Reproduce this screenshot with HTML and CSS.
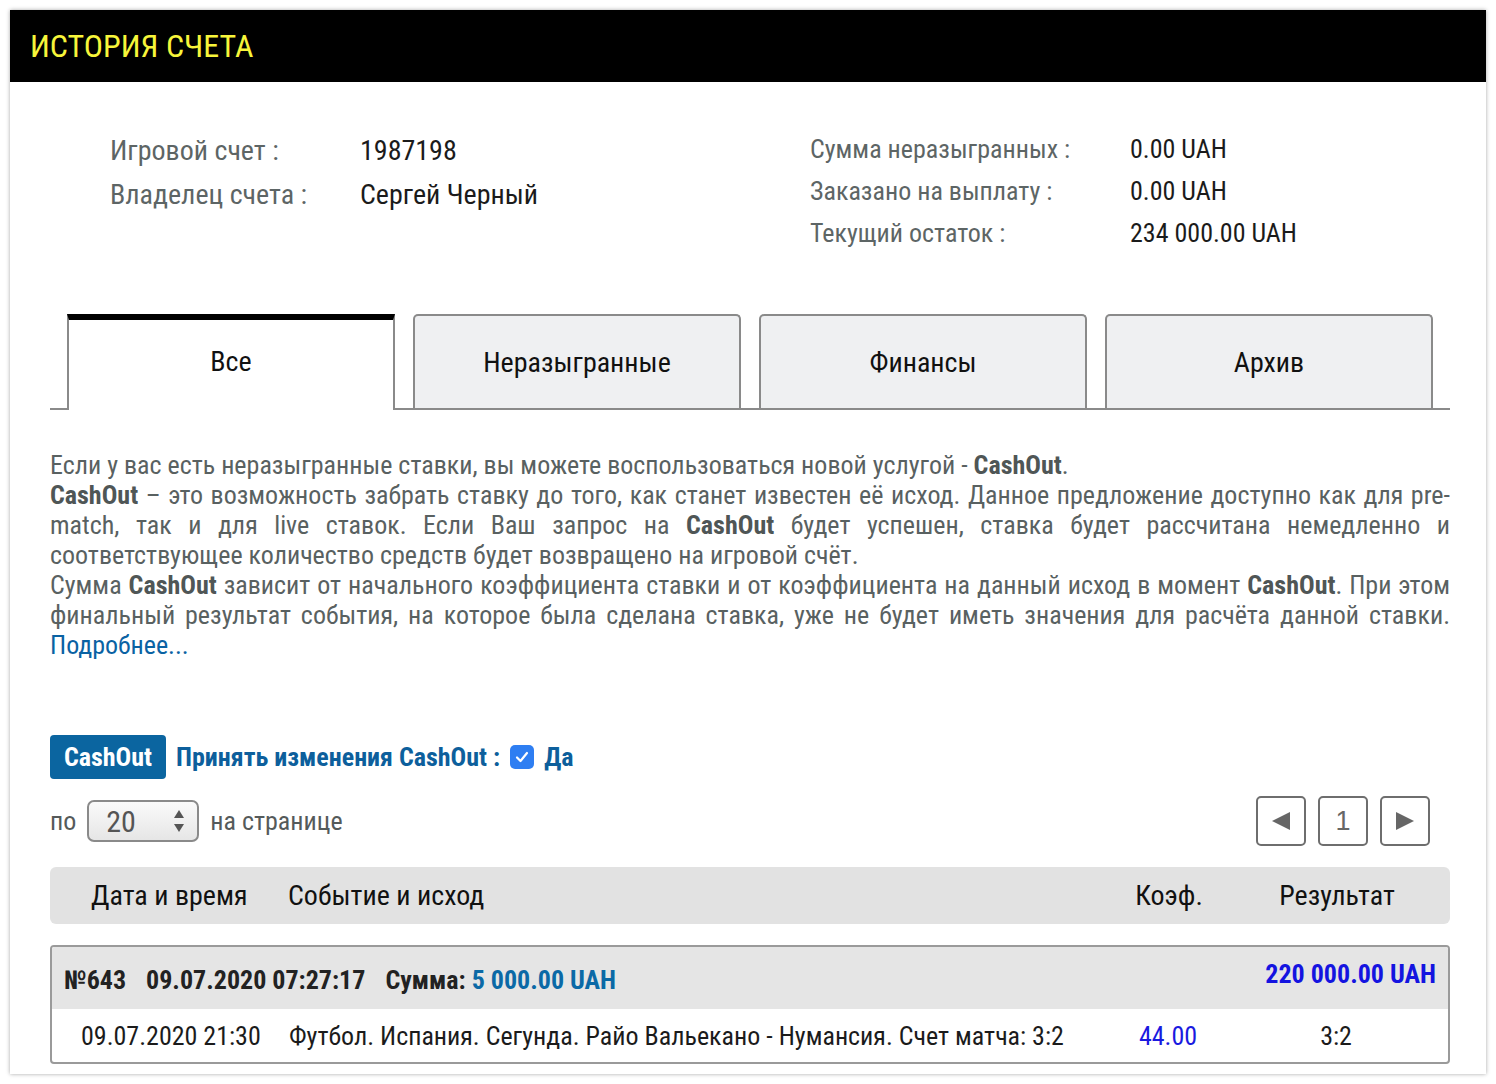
FILE: index.html
```html
<!DOCTYPE html>
<html lang="ru">
<head>
<meta charset="utf-8">
<title>История счета</title>
<link rel="stylesheet" href="styles.css">
</head>
<body>
<div class="card">
  <div class="topbar"><h1 class="title">ИСТОРИЯ СЧЕТА</h1></div>

  <div class="info">
    <div class="info-left">
      <div class="lbl">Игровой счет :</div><div class="val">1987198</div>
      <div class="lbl">Владелец счета :</div><div class="val">Сергей Черный</div>
    </div>
    <div class="info-right">
      <div class="lbl">Сумма неразыгранных :</div><div class="val">0.00 UAH</div>
      <div class="lbl">Заказано на выплату :</div><div class="val">0.00 UAH</div>
      <div class="lbl">Текущий остаток :</div><div class="val">234 000.00 UAH</div>
    </div>
  </div>

  <div class="content">
    <div class="tabs">
      <div class="tab active">Все</div>
      <div class="tab">Неразыгранные</div>
      <div class="tab">Финансы</div>
      <div class="tab">Архив</div>
    </div>

    <div class="desc">
      <p>Если у вас есть неразыгранные ставки, вы можете воспользоваться новой услугой - <b>CashOut</b>.</p>
      <p class="just"><b>CashOut</b> – это возможность забрать ставку до того, как станет известен её исход. Данное предложение доступно как для pre-match, так и для live ставок. Если Ваш запрос на <b>CashOut</b> будет успешен, ставка будет рассчитана немедленно и соответствующее количество средств будет возвращено на игровой счёт.</p>
      <p class="just">Сумма <b>CashOut</b> зависит от начального коэффициента ставки и от коэффициента на данный исход в момент <b>CashOut</b>. При этом финальный результат события, на которое была сделана ставка, уже не будет иметь значения для расчёта данной ставки. <a class="more" href="#">Подробнее...</a></p>
    </div>

    <div class="cashout-row">
      <span class="cashout-btn">CashOut</span>
      <span class="accept">Принять изменения CashOut :</span>
      <span class="check"><svg width="14" height="12" viewBox="0 0 14 12"><path d="M2 6.5 L5.5 10 L12 2" fill="none" stroke="#fff" stroke-width="2.2" stroke-linecap="round" stroke-linejoin="round"/></svg></span>
      <span class="accept">Да</span>
    </div>

    <div class="pager-row">
      <div class="perpage">
        <span>по</span>
        <span class="select"><span class="sel-val">20</span><span class="sel-arrows"><svg width="12" height="28" viewBox="0 0 12 28"><path d="M6 3 L11 11 L1 11 Z" fill="#555"/><path d="M6 25 L11 17 L1 17 Z" fill="#555"/></svg></span></span>
        <span>на странице</span>
      </div>
      <div class="pages">
        <span class="pbtn"><svg width="22" height="22" viewBox="0 0 22 22"><path d="M2 11 L20 2 L20 20 Z" fill="#666"/></svg></span>
        <span class="pbtn num">1</span>
        <span class="pbtn"><svg width="22" height="22" viewBox="0 0 22 22"><path d="M20 11 L2 2 L2 20 Z" fill="#666"/></svg></span>
      </div>
    </div>

    <div class="thead">
      <div>Дата и время</div>
      <div>Событие и исход</div>
      <div class="c">Коэф.</div>
      <div class="c">Результат</div>
    </div>

    <div class="bet">
      <div class="bet-head">
        <div class="bet-meta"><span class="m">№643</span><span class="m">09.07.2020 07:27:17</span><span>Сумма: <span class="sum">5 000.00 UAH</span></span></div>
        <div class="win">220 000.00 UAH</div>
      </div>
      <div class="bet-row">
        <div>09.07.2020 21:30</div>
        <div>Футбол. Испания. Сегунда. Райо Вальекано - Нумансия. Счет матча: 3:2</div>
        <div class="c coef">44.00</div>
        <div class="c">3:2</div>
      </div>
    </div>
  </div>
</div>
</body>
</html>
```

FILE: styles.css
```css
* { box-sizing: border-box; }
html, body { margin: 0; padding: 0; background: #fff; }
body {
  font-family: "Roboto Condensed", "Liberation Sans Narrow", "Roboto", sans-serif;
  color: #1b1b1b;
}
.card {
  margin: 10px;
  width: 1476px;
  height: 1064px;
  background: #fff;
  box-shadow: 0 0 4px rgba(0,0,0,0.35);
  overflow: hidden;
}
.topbar {
  height: 72px;
  background: #000;
  display: flex;
  align-items: center;
  padding-left: 20px;
}
.title {
  margin: 0;
  font-weight: 400;
  font-size: 32px;
  color: #f7f53a;
}
.info {
  display: flex;
  padding: 46px 0 0 100px;
  height: 233px;
}
.info-left {
  display: grid;
  grid-template-columns: 250px auto;
  grid-auto-rows: 44px;
  align-items: center;
  font-size: 28px;
  width: 700px;
  align-content: start;
}
.info-right {
  display: grid;
  grid-template-columns: 320px auto;
  grid-auto-rows: 42px;
  align-items: center;
  font-size: 26px;
  align-content: start;
}
.lbl { color: #5d6565; }
.val { color: #1b1b1b; }

.content { padding: 0 36px 0 40px; }
.tabs {
  display: flex;
  gap: 18px;
  padding-left: 17px;
  border-bottom: 2px solid #8a8a8a;
  height: 95px;
  align-items: flex-end;
}
.tab {
  width: 328px;
  height: 94px;
  background: #eff0f2;
  border: 2px solid #8a8a8a;
  border-bottom: none;
  border-radius: 5px 5px 0 0;
  display: flex;
  align-items: center;
  justify-content: center;
  font-size: 28px;
  color: #111;
}
.tab.active {
  background: #fff;
  border-top: 6px solid #000;
  border-radius: 0;
  height: 96px;
  margin-bottom: -2px;
  padding-bottom: 7px;
}
.desc {
  margin-top: 40px;
  font-size: 26px;
  line-height: 30px;
  color: #596161;
}
.desc p { margin: 0; }
.desc b { color: #4f5656; }
.just { text-align: justify; }
.more { color: #0a62a3; text-decoration: none; }

.cashout-row {
  display: flex;
  align-items: center;
  margin-top: 75px;
  height: 44px;
}
.cashout-btn {
  background: #0b65a0;
  color: #fff;
  font-weight: 700;
  font-size: 26px;
  height: 44px;
  width: 116px;
  border-radius: 4px;
  display: flex;
  align-items: center;
  justify-content: center;
  margin-right: 10px;
}
.accept {
  color: #0d5f9c;
  font-weight: 700;
  font-size: 26px;
}
.check {
  width: 24px;
  height: 24px;
  border-radius: 5px;
  background: #2e7ef2;
  display: inline-flex;
  align-items: center;
  justify-content: center;
  margin: 0 10px;
}
.pager-row {
  display: flex;
  justify-content: space-between;
  align-items: center;
  margin-top: 17px;
  padding-right: 20px;
}
.perpage {
  display: flex;
  align-items: center;
  font-size: 26px;
  color: #555a5a;
  gap: 11px;
}
.select {
  width: 112px;
  height: 42px;
  border: 2px solid #8a8a8a;
  border-radius: 7px;
  background: linear-gradient(#fafafa, #e6e6e6);
  display: flex;
  align-items: center;
  justify-content: space-between;
  padding: 0 12px 0 17px;
  font-size: 30px;
  color: #555;
}
.sel-arrows { display: flex; }
.pages { display: flex; gap: 12px; }
.pbtn {
  width: 50px;
  height: 50px;
  border: 2px solid #6e6e6e;
  border-radius: 5px;
  display: flex;
  align-items: center;
  justify-content: center;
  font-size: 27px;
  color: #666;
  font-family: "Liberation Sans", Arial, sans-serif;
}
.thead {
  margin-top: 21px;
  height: 57px;
  background: #e2e2e2;
  border-radius: 6px;
  display: grid;
  grid-template-columns: 197px 1fr 118px 218px;
  padding: 0 4px 0 41px;
  align-items: center;
  font-size: 28px;
  color: #111;
}
.c { text-align: center; }
.bet {
  margin-top: 21px;
  border: 2px solid #9a9a9a;
  border-radius: 4px;
  overflow: hidden;
}
.bet-head {
  height: 62px;
  background: #e5e5e5;
  display: flex;
  justify-content: space-between;
  padding: 0 12px;
  font-weight: 700;
  font-size: 26px;
  color: #222;
}
.bet-meta { display: flex; align-items: center; padding-top: 4px; }
.m { margin-right: 20px; }
.sum { color: #0b69a6; }
.win { color: #1414e0; display: flex; align-items: center; padding-bottom: 8px; }
.bet-row {
  height: 53px;
  display: grid;
  grid-template-columns: 208px 1fr 118px 218px;
  padding: 0 3px 0 29px;
  align-items: center;
  font-size: 26px;
  color: #1b1b1b;
}
.coef { color: #1a1ae0; }
```
